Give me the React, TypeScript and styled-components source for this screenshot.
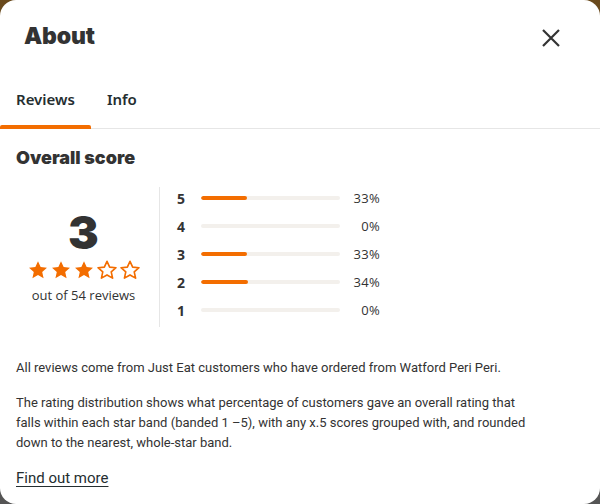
import React from 'react';
import styled, { createGlobalStyle } from 'styled-components';

const GlobalStyle = createGlobalStyle`
  html, body {
    margin: 0;
    padding: 0;
    width: 600px;
    height: 504px;
    overflow: hidden;
    background: linear-gradient(180deg, #6a4a1c 0%, #5c5248 50%, #555555 100%);
  }
  * { box-sizing: border-box; }
`;

const ORANGE = '#f36d00';
const INK = '#242e30';

const Modal = styled.div`
  width: 600px;
  height: 504px;
  background: #ffffff;
  border-radius: 16px;
  overflow: hidden;
  display: flex;
  flex-direction: column;
  font-family: Roboto, 'Noto Sans', sans-serif;
  color: ${INK};
`;

const Header = styled.div`
  display: flex;
  align-items: flex-start;
  justify-content: space-between;
  padding: 22px 37px 0 24px;
  height: 72px;
`;

const Title = styled.h2`
  margin: 0;
  font-family: Inter, 'Noto Sans', sans-serif;
  font-weight: 900;
  font-size: 23px;
  letter-spacing: -0.2px;
  line-height: 28px;
  color: #333;
`;

const CloseButton = styled.button`
  border: none;
  background: none;
  padding: 0;
  width: 24px;
  height: 24px;
  margin-top: 4px;
  display: flex;
  align-items: center;
  justify-content: center;
  cursor: pointer;
  color: #333;
`;

const Tabs = styled.div`
  display: flex;
  border-bottom: 1px solid #e6e6e6;
  height: 57px;
  padding-bottom: 2px;
`;

const Tab = styled.div<{ $active?: boolean }>`
  position: relative;
  padding: 0 16px;
  display: flex;
  align-items: center;
  font-size: 15px;
  font-weight: 600;
  color: ${INK};
  font-family: 'Noto Sans', sans-serif;
  &::after {
    content: '';
    display: ${(p) => (p.$active ? 'block' : 'none')};
    position: absolute;
    left: 0;
    right: 0;
    bottom: -3px;
    height: 4px;
    border-radius: 2px 2px 0 0;
    background: ${ORANGE};
  }
`;

const Body = styled.div`
  padding: 16px 16px 0 16px;
  display: flex;
  flex-direction: column;
`;

const SectionTitle = styled.h3`
  margin: 0;
  font-family: Inter, 'Noto Sans', sans-serif;
  font-weight: 900;
  font-size: 18px;
  line-height: 26px;
  color: #333;
`;

const ScoreArea = styled.div`
  display: flex;
  margin-top: 16px;
`;

const ScoreSummary = styled.div`
  width: 144px;
  display: flex;
  flex-direction: column;
  align-items: center;
  justify-content: center;
  border-right: 1px solid #e6e6e6;
  height: 140px;
  padding: 0 8px 0 0;
`;

const BigScore = styled.div`
  font-family: Inter, 'Noto Sans', sans-serif;
  font-weight: 900;
  font-size: 46px;
  line-height: 44px;
  color: #333;
`;

const Stars = styled.div`
  display: flex;
  gap: 1px;
  margin-top: 5px;
`;

const ReviewCount = styled.div`
  margin-top: 5px;
  font-family: 'Open Sans', sans-serif;
  font-size: 13px;
  color: #333;
`;

const Distribution = styled.div`
  display: flex;
  flex-direction: column;
  padding-left: 17px;
  margin-top: -3px;
`;

const Row = styled.div`
  display: flex;
  align-items: center;
  height: 28px;
  font-family: 'Open Sans', sans-serif;
  font-size: 13px;
  color: #333;
`;

const RowLabel = styled.span`
  width: 24px;
  font-weight: 700;
  font-size: 14px;
`;

const Track = styled.div`
  width: 139px;
  height: 4px;
  border-radius: 2px;
  background: #f3f0ec;
  overflow: hidden;
`;

const Fill = styled.div`
  height: 100%;
  border-radius: 2px;
  background: ${ORANGE};
`;

const Percent = styled.span`
  width: 40px;
  text-align: right;
  letter-spacing: 0.3px;
`;

const Paragraph = styled.p`
  margin: 0;
  font-family: Roboto, 'Noto Sans', sans-serif;
  font-size: 13px;
  line-height: 20px;
  color: #333;
`;

const Notes = styled.div`
  display: flex;
  flex-direction: column;
  gap: 15px;
  margin-top: 31px;
`;

const Link = styled.a`
  margin-top: 16px;
  font-family: Roboto, 'Noto Sans', sans-serif;
  font-size: 15px;
  color: ${INK};
  text-decoration: underline;
  text-underline-offset: 3px;
  align-self: flex-start;
`;

const Star = ({ filled }: { filled: boolean }) => (
  <svg width="22" height="22" viewBox="0 0 24 24">
    <path
      d="M12 2.5l2.9 6.3 6.9.7-5.2 4.6 1.5 6.8L12 17.4l-6.1 3.5 1.5-6.8-5.2-4.6 6.9-.7z"
      fill={filled ? ORANGE : 'none'}
      stroke={ORANGE}
      strokeWidth={filled ? 0 : 1.8}
      strokeLinejoin="round"
    />
  </svg>
);

const rows = [
  { star: 5, pct: 33 },
  { star: 4, pct: 0 },
  { star: 3, pct: 33 },
  { star: 2, pct: 34 },
  { star: 1, pct: 0 },
];

export default function App() {
  return (
    <>
      <GlobalStyle />
      <Modal>
        <Header>
          <Title>About</Title>
          <CloseButton aria-label="Close">
            <svg width="20" height="20" viewBox="0 0 20 20">
              <path d="M2 2L18 18M18 2L2 18" stroke="currentColor" strokeWidth="2.2" />
            </svg>
          </CloseButton>
        </Header>
        <Tabs>
          <Tab $active>Reviews</Tab>
          <Tab>Info</Tab>
        </Tabs>
        <Body>
          <SectionTitle>Overall score</SectionTitle>
          <ScoreArea>
            <ScoreSummary>
              <BigScore>3</BigScore>
              <Stars>
                {[1, 2, 3, 4, 5].map((i) => (
                  <Star key={i} filled={i <= 3} />
                ))}
              </Stars>
              <ReviewCount>out of 54 reviews</ReviewCount>
            </ScoreSummary>
            <Distribution>
              {rows.map((r) => (
                <Row key={r.star}>
                  <RowLabel>{r.star}</RowLabel>
                  <Track>
                    <Fill style={{ width: `${r.pct}%` }} />
                  </Track>
                  <Percent>{r.pct}%</Percent>
                </Row>
              ))}
            </Distribution>
          </ScoreArea>
          <Notes>
            <Paragraph>
              All reviews come from Just Eat customers who have ordered from Watford Peri Peri.
            </Paragraph>
            <Paragraph>
              The rating distribution shows what percentage of customers gave an overall rating that
              <br />
              falls within each star band (banded 1 –5), with any x.5 scores grouped with, and rounded
              <br />
              down to the nearest, whole-star band.
            </Paragraph>
          </Notes>
          <Link href="#">Find out more</Link>
        </Body>
      </Modal>
    </>
  );
}
